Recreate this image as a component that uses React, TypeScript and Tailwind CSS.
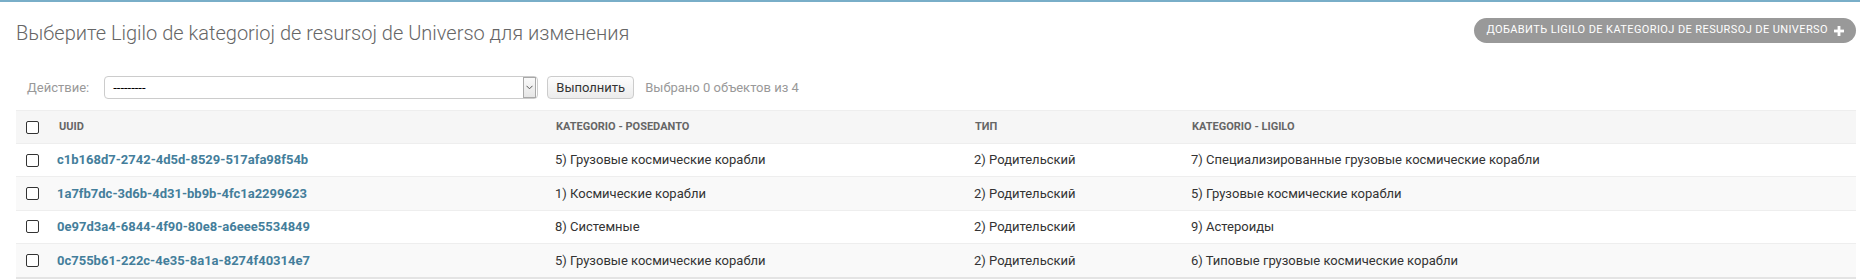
import React from "react";

const rows = [
  {
    id: "c1b168d7-2742-4d5d-8529-517afa98f54b",
    pos: "5) Грузовые космические корабли",
    tip: "2) Родительский",
    lig: "7) Специализированные грузовые космические корабли",
  },
  {
    id: "1a7fb7dc-3d6b-4d31-bb9b-4fc1a2299623",
    pos: "1) Космические корабли",
    tip: "2) Родительский",
    lig: "5) Грузовые космические корабли",
  },
  {
    id: "0e97d3a4-6844-4f90-80e8-a6eee5534849",
    pos: "8) Системные",
    tip: "2) Родительский",
    lig: "9) Астероиды",
  },
  {
    id: "0c755b61-222c-4e35-8a1a-8274f40314e7",
    pos: "5) Грузовые космические корабли",
    tip: "2) Родительский",
    lig: "6) Типовые грузовые космические корабли",
  },
];

function Box() {
  return <div className="w-[13px] h-[13px] border border-[#333] rounded-[2px] bg-white" />;
}

export default function App() {
  return (
    <div
      className="w-[1860px] h-[279px] overflow-hidden bg-white text-[#333]"
      style={{ fontFamily: "Roboto, 'Liberation Sans', sans-serif" }}
    >
      <div className="h-[2px] bg-[#79aec8]" />
      <div className="pl-[16px] pr-[4px]">
        <div className="flex justify-between items-start">
          <h1 className="mt-[19px] text-[20px] leading-[24px] font-light text-[#666]">
            Выберите Ligilo de kategorioj de resursoj de Universo для изменения
          </h1>
          <div className="mt-[16px] h-[25px] flex items-center rounded-full bg-[#999] pl-[12px] pr-[12px] text-white text-[11px] uppercase tracking-[0.4px]">
            <span>Добавить Ligilo de kategorioj de resursoj de Universo</span>
            <svg width="10" height="10" viewBox="0 0 10 10" className="ml-[6px]">
              <rect x="3.6" y="0" width="2.8" height="10" fill="#fff" />
              <rect x="0" y="3.6" width="10" height="2.8" fill="#fff" />
            </svg>
          </div>
        </div>

        <div className="mt-[31px] h-[23px] flex items-center text-[13px]">
          <span className="ml-[11px] text-[#999]">Действие:</span>
          <div className="ml-[15px] w-[434px] h-[23px] flex items-center border border-[#ccc] rounded-[4px] bg-white">
            <span className="flex-1 pl-[8px] text-black text-[13px] leading-none">---------</span>
            <div className="w-[13px] h-[21px] mr-px flex items-center justify-center border border-[#a9a9a9] bg-gradient-to-b from-[#fafafa] to-[#e6e6e6]">
              <svg width="7" height="5" viewBox="0 0 7 5">
                <path d="M0.5 0.8 L3.5 3.8 L6.5 0.8" fill="none" stroke="#555" strokeWidth="1" />
              </svg>
            </div>
          </div>
          <div className="ml-[9px] w-[87px] h-[23px] flex items-center justify-center border border-[#ccc] rounded-[4px] bg-gradient-to-b from-[#fdfdfd] to-[#ececec] text-[#333] text-[13px]">
            Выполнить
          </div>
          <span className="ml-[11px] text-[#999]">Выбрано 0 объектов из 4</span>
        </div>

        <div className="mt-[11px]">
          <div className="flex h-[33px] items-center border-t border-[#eee] bg-[#f6f6f6] text-[11px] font-bold uppercase text-[#666]">
            <div className="w-[33px] pl-[10px]">
              <Box />
            </div>
            <div className="w-[497px] pl-[10px]">UUID</div>
            <div className="w-[419px] pl-[10px]">Kategorio - posedanto</div>
            <div className="w-[217px] pl-[10px]">Тип</div>
            <div className="flex-1 pl-[10px]">Kategorio - ligilo</div>
          </div>
          {rows.map((r, i) => (
            <div
              key={r.id}
              className={
                "flex h-[33.4px] items-center border-t border-[#eee] text-[13px] " +
                (i % 2 === 1 ? "bg-[#f9f9f9]" : "bg-white")
              }
            >
              <div className="w-[33px] pl-[10px]">
                <Box />
              </div>
              <div className="w-[497px] pl-[8px] font-bold text-[#447e9b]">{r.id}</div>
              <div className="w-[419px] pl-[9px]">{r.pos}</div>
              <div className="w-[217px] pl-[9px]">{r.tip}</div>
              <div className="flex-1 pl-[9px]">{r.lig}</div>
            </div>
          ))}
          <div className="h-[2px] bg-[#e4e4e4]" />
        </div>
      </div>
    </div>
  );
}
